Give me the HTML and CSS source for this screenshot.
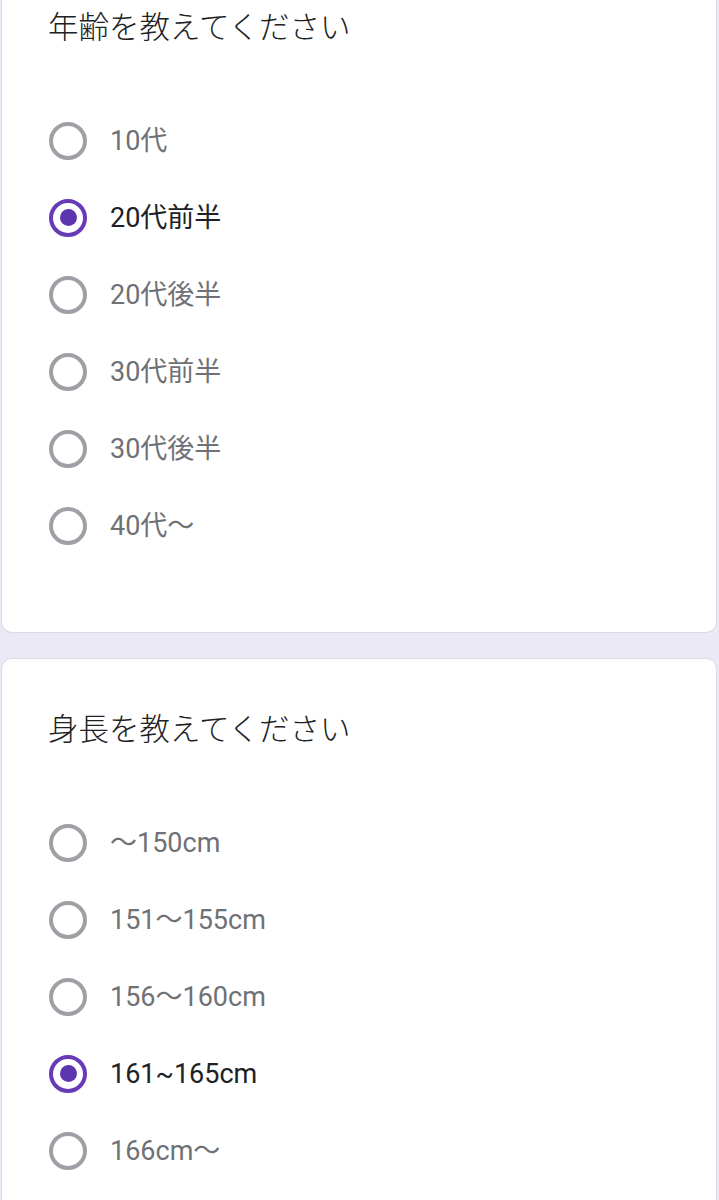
FILE: index.html
```html
<!DOCTYPE html>
<html lang="ja">
<head>
<meta charset="utf-8">
<title>フォーム</title>
<link rel="stylesheet" href="styles.css">
</head>
<body>
<main class="page">
  <section class="card card--clipped">
    <h2 class="question">年齢を教えてください</h2>
    <ul class="options">
      <li class="option"><span class="radio"></span><span class="label">10代</span></li>
      <li class="option option--checked"><span class="radio"></span><span class="label">20代前半</span></li>
      <li class="option"><span class="radio"></span><span class="label">20代後半</span></li>
      <li class="option"><span class="radio"></span><span class="label">30代前半</span></li>
      <li class="option"><span class="radio"></span><span class="label">30代後半</span></li>
      <li class="option"><span class="radio"></span><span class="label">40代〜</span></li>
    </ul>
  </section>
  <section class="card">
    <h2 class="question">身長を教えてください</h2>
    <ul class="options">
      <li class="option"><span class="radio"></span><span class="label">〜150cm</span></li>
      <li class="option"><span class="radio"></span><span class="label">151〜155cm</span></li>
      <li class="option"><span class="radio"></span><span class="label">156〜160cm</span></li>
      <li class="option option--checked"><span class="radio"></span><span class="label">161~165cm</span></li>
      <li class="option"><span class="radio"></span><span class="label">166cm〜</span></li>
      <li class="option"><span class="radio"></span><span class="label">&nbsp;</span></li>
    </ul>
  </section>
</main>
</body>
</html>
```

FILE: styles.css
```css
html, body {
  margin: 0;
  padding: 0;
}
body {
  background: #ece9f6;
  font-family: Roboto, "Noto Sans CJK JP", sans-serif;
  color: #202124;
}
.page {
  display: flex;
  flex-direction: column;
  gap: 25px;
  padding: 0 2px 0 1px;
}
.card {
  background: #ffffff;
  border: 1px solid #dadce0;
  border-radius: 11px;
  padding: 48px 0 68px 47px;
}
.card--clipped {
  border-top: 0;
  border-radius: 0 0 11px 11px;
  padding-top: 5px;
}
.question {
  margin: 0 0 57px -1px;
  font-family: "Noto Sans CJK JP", sans-serif;
  font-size: 30.5px;
  line-height: 40px;
  font-weight: 300;
  color: #202124;
}
.options {
  list-style: none;
  margin: 0;
  padding: 0;
}
.option {
  display: flex;
  align-items: center;
  gap: 23px;
  height: 77px;
}
.radio {
  box-sizing: border-box;
  width: 38px;
  height: 38px;
  border: 4px solid #9ea0a5;
  border-radius: 50%;
  flex: none;
  display: flex;
  align-items: center;
  justify-content: center;
}
.option--checked .radio {
  border-color: #673ab7;
}
.option--checked .radio::after {
  content: "";
  width: 17px;
  height: 17px;
  border-radius: 50%;
  background: #5e35b1;
}
.label {
  font-size: 27px;
  line-height: 36px;
  color: #6f7176;
}
.option--checked .label {
  color: #202124;
}
```
